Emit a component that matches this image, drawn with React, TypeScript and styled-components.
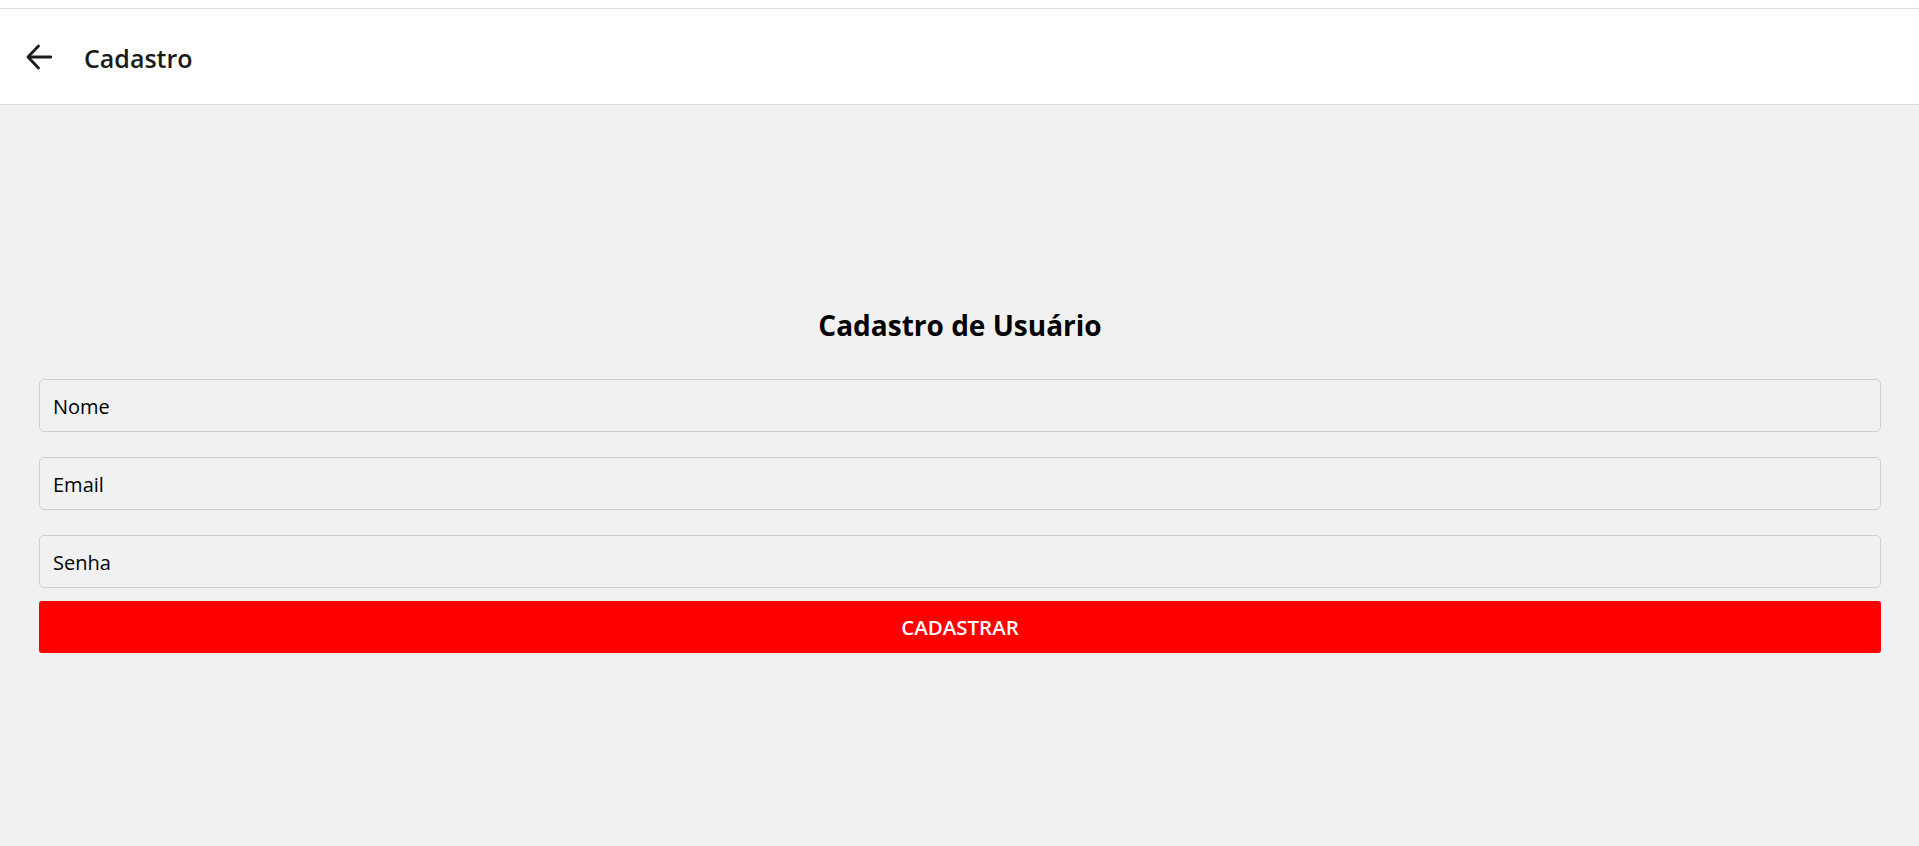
import React from 'react';
import styled, { createGlobalStyle } from 'styled-components';

const GlobalStyle = createGlobalStyle`
  html, body {
    margin: 0;
    padding: 0;
    background: #f1f1f1;
    font-family: 'Open Sans', 'Noto Sans', sans-serif;
    color: #111;
  }
  * {
    box-sizing: border-box;
  }
`;

const Page = styled.div`
  min-height: 846px;
  display: flex;
  flex-direction: column;
`;

const TopStrip = styled.div`
  height: 9px;
  background: #fff;
  border-bottom: 1px solid #dedede;
`;

const Header = styled.header`
  height: 96px;
  background: #fff;
  border-bottom: 1px solid #d9d9d9;
  display: flex;
  align-items: center;
  padding: 0 0 0 26px;
  gap: 32px;
`;

const BackButton = styled.button`
  border: none;
  background: transparent;
  padding: 0;
  width: 26px;
  height: 26px;
  display: flex;
  align-items: center;
  justify-content: center;
  color: #1a1a1a;
  cursor: pointer;
`;

const HeaderTitle = styled.h1`
  margin: 0;
  font-size: 25px;
  font-weight: 600;
  color: #1a1a1a;
  line-height: 32px;
  padding-top: 2px;
`;

const Content = styled.main`
  flex: 1;
  padding: 203px 38px 0 39px;
`;

const FormTitle = styled.h2`
  margin: 0 0 37px;
  text-align: center;
  font-size: 28px;
  font-weight: 700;
  line-height: 34px;
  color: #000;
`;

const Form = styled.form`
  display: flex;
  flex-direction: column;
`;

const Field = styled.input<{ $last?: boolean }>`
  height: 53px;
  width: 100%;
  border: 1px solid #cfcfcf;
  border-radius: 5px;
  background: #f1f1f1;
  padding: 2px 13px 0;
  font-family: inherit;
  font-size: 20px;
  color: #000;
  margin-bottom: ${(p) => (p.$last ? '13px' : '25px')};
  outline: none;

  &::placeholder {
    color: #000;
    opacity: 1;
  }
`;

const SubmitButton = styled.button`
  height: 52px;
  width: 100%;
  border: none;
  border-radius: 3px;
  background: #ff0000;
  color: #fff;
  font-family: inherit;
  font-size: 20.5px;
  font-weight: 600;
  cursor: pointer;
`;

const ArrowBack = () => (
  <svg width="26" height="26" viewBox="0 0 26 26" fill="none">
    <polyline
      points="12.5 2 2 13 12.5 24"
      stroke="currentColor"
      strokeWidth="2.8"
      strokeLinecap="round"
      strokeLinejoin="round"
    />
    <line x1="2.5" y1="13" x2="25" y2="13" stroke="currentColor" strokeWidth="2.8" strokeLinecap="round" />
  </svg>
);

export default function App() {
  return (
    <Page>
      <GlobalStyle />
      <TopStrip />
      <Header>
        <BackButton aria-label="Voltar">
          <ArrowBack />
        </BackButton>
        <HeaderTitle>Cadastro</HeaderTitle>
      </Header>
      <Content>
        <FormTitle>Cadastro de Usuário</FormTitle>
        <Form onSubmit={(e) => e.preventDefault()}>
          <Field type="text" placeholder="Nome" />
          <Field type="email" placeholder="Email" />
          <Field type="password" placeholder="Senha" $last />
          <SubmitButton type="submit">CADASTRAR</SubmitButton>
        </Form>
      </Content>
    </Page>
  );
}
